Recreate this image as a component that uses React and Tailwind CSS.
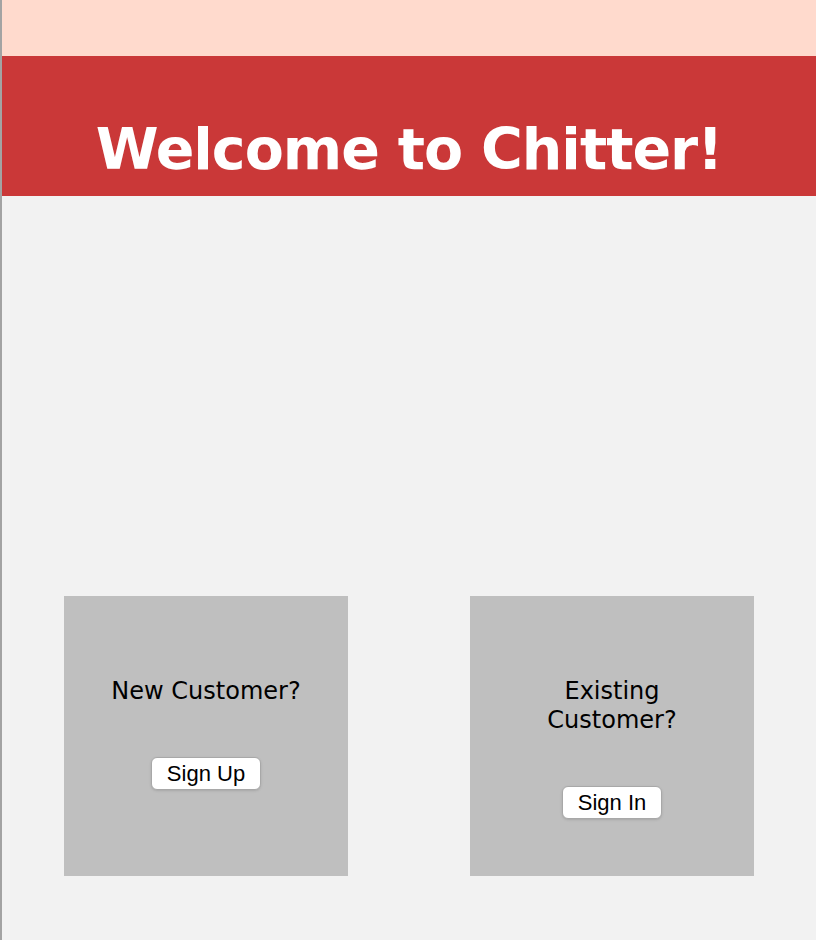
export default function App() {
  return (
    <div className="min-h-[940px] bg-[#f2f2f2] border-l-2 border-[#a3a3a3] font-['DejaVu_Sans',sans-serif]">
      <div className="h-[56px] bg-[#ffdacd]" />
      <header className="h-[140px] bg-[#ca3838] flex items-end justify-center pb-[12px]">
        <h1 className="text-white font-bold text-[57px] leading-[70px] tracking-[-1px]">Welcome to Chitter!</h1>
      </header>

      <div className="flex justify-between px-[62px] pt-[400px]">
        <div className="w-[284px] h-[280px] bg-[#bfbfbf] flex flex-col items-center pt-[81px] px-[40px] text-center">
          <p className="text-[24px] leading-[29px] text-black">New Customer?</p>
          <button className="mt-[51px] h-[33px] px-[15px] bg-white border border-[#a8a8a8] rounded-md shadow-sm text-[22px] leading-[30px] text-black font-['Liberation_Sans',sans-serif]">
            Sign Up
          </button>
        </div>
        <div className="w-[284px] h-[280px] bg-[#bfbfbf] flex flex-col items-center pt-[81px] px-[40px] text-center">
          <p className="text-[24px] leading-[29px] text-black">Existing Customer?</p>
          <button className="mt-[51px] h-[33px] px-[15px] bg-white border border-[#a8a8a8] rounded-md shadow-sm text-[22px] leading-[30px] text-black font-['Liberation_Sans',sans-serif]">
            Sign In
          </button>
        </div>
      </div>
    </div>
  )
}
